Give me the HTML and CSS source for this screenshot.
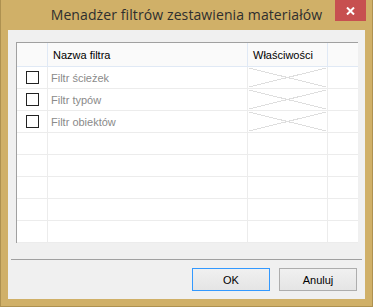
FILE: index.html
```html
<!DOCTYPE html>
<html lang="pl">
<head>
<meta charset="UTF-8" />
<title>Menadżer filtrów zestawienia materiałów</title>
<link rel="stylesheet" href="styles.css">
</head>
<body>

<div class="window">
  <!-- TITLE BAR -->
  <div class="titlebar">
    <span></span>
    <h1 class="title">Menadżer filtrów zestawienia materiałów</h1>
    <button class="close" title="Zamknij">
      <svg width="9" height="8" viewBox="0 0 9 8">
        <path d="M1 0.5 L8 7.5 M8 0.5 L1 7.5" stroke="#fff" stroke-width="2" fill="none" />
      </svg>
    </button>
  </div>

  <!-- CLIENT AREA -->
  <div class="client">
    <div class="panel">
      <table class="grid">
        <colgroup>
          <col class="c-check">
          <col class="c-name">
          <col class="c-props">
          <col class="c-rest">
        </colgroup>
        <thead>
          <tr>
            <th></th>
            <th>Nazwa filtra</th>
            <th>Właściwości</th>
            <th></th>
          </tr>
        </thead>
        <tbody>
          <tr>
            <td class="check"><span class="box"></span></td>
            <td class="name">Filtr ścieżek</td>
            <td class="props"><svg width="79" height="21" viewBox="0 0 79 21" preserveAspectRatio="none" shape-rendering="crispEdges"><path d="M1 1 L78 20 M1 20 L78 1" stroke="#dedede" fill="none" /></svg></td>
            <td></td>
          </tr>
          <tr>
            <td class="check"><span class="box"></span></td>
            <td class="name">Filtr typów</td>
            <td class="props"><svg width="79" height="21" viewBox="0 0 79 21" preserveAspectRatio="none" shape-rendering="crispEdges"><path d="M1 1 L78 20 M1 20 L78 1" stroke="#dedede" fill="none" /></svg></td>
            <td></td>
          </tr>
          <tr>
            <td class="check"><span class="box"></span></td>
            <td class="name">Filtr obiektów</td>
            <td class="props"><svg width="79" height="21" viewBox="0 0 79 21" preserveAspectRatio="none" shape-rendering="crispEdges"><path d="M1 1 L78 20 M1 20 L78 1" stroke="#dedede" fill="none" /></svg></td>
            <td></td>
          </tr>
          <tr><td></td><td></td><td></td><td></td></tr>
          <tr><td></td><td></td><td></td><td></td></tr>
          <tr><td></td><td></td><td></td><td></td></tr>
          <tr><td></td><td></td><td></td><td></td></tr>
          <tr><td></td><td></td><td></td><td></td></tr>
        </tbody>
      </table>
    </div>

    <div class="separator"></div>

    <div class="actions">
      <button class="btn default">OK</button>
      <button class="btn">Anuluj</button>
    </div>
  </div>
</div>

</body>
</html>
```

FILE: styles.css
```css
* {
  box-sizing: border-box;
}
body {
  margin: 0;
  font-family: 'Liberation Sans', Arial, sans-serif;
  font-size: 11px;
}

/* WINDOW FRAME */
.window {
  width: 373px;
  height: 307px;
  background: #d0b068;
  border: 1px solid #ae9150;
  border-top: none;
  padding: 0 7px 7px;
  display: flex;
  flex-direction: column;
}
.titlebar {
  height: 30px;
  margin: 0 -7px;
  display: grid;
  grid-template-columns: 1fr auto 1fr;
  align-items: start;
}
.title {
  margin: 0;
  font-family: 'Open Sans', 'Noto Sans', sans-serif;
  font-weight: 400;
  font-size: 14px;
  letter-spacing: 0.1px;
  line-height: 30px;
  color: #2e2e2e;
  white-space: nowrap;
}
.close {
  justify-self: end;
  width: 31px;
  height: 21px;
  margin-right: 6px;
  padding: 0;
  border: none;
  background: #c75050;
  display: flex;
  align-items: center;
  justify-content: center;
}
.close svg {
  display: block;
}

/* CLIENT AREA */
.client {
  flex: 1;
  background: #f0f0f0;
  padding: 12px 7px 0 8px;
}
.panel {
  width: 342px;
  height: 201px;
  background: #fff;
  border-top: 1px solid #a0a0a0;
  border-left: 1px solid #a0a0a0;
}

/* GRID */
.grid {
  width: 341px;
  table-layout: fixed;
  border-collapse: separate;
  border-spacing: 0;
}
.c-check { width: 31px; }
.c-name { width: 200px; }
.c-props { width: 80px; }
.c-rest { width: 30px; }
.grid th,
.grid td {
  padding: 0;
  border-right: 1px solid #ececec;
  border-bottom: 1px solid #ececec;
  text-align: left;
  vertical-align: middle;
  white-space: nowrap;
  overflow: hidden;
}
.grid th {
  height: 24px;
  background: #fafafa;
  font-weight: 400;
  color: #000;
  padding-left: 5px;
  border-right-color: #e0e9f5;
  border-bottom-color: #e0e9f5;
}
.grid td {
  height: 22px;
}
.grid th:last-child,
.grid td:last-child {
  border-right: none;
}
.grid td.check {
  padding-left: 9px;
}
.box {
  display: block;
  width: 13px;
  height: 13px;
  border: 1px solid #222;
  background: #fff;
}
.grid td.name {
  padding-left: 3px;
  color: #8a8a8a;
}
.grid td.props svg {
  display: block;
}

/* FOOTER */
.separator {
  height: 1px;
  margin: 16px -4px 0 -5px;
  background: #a0a0a0;
}
.actions {
  display: flex;
  justify-content: flex-end;
  gap: 9px;
  margin-top: 8px;
  padding-right: 1px;
}
.btn {
  width: 78px;
  height: 23px;
  padding: 0;
  border: 1px solid #adadad;
  background: linear-gradient(#f0f0f0, #e5e5e5);
  font-family: 'Liberation Sans', Arial, sans-serif;
  font-size: 11px;
  color: #000;
}
.btn.default {
  border-color: #3399ff;
}
```
